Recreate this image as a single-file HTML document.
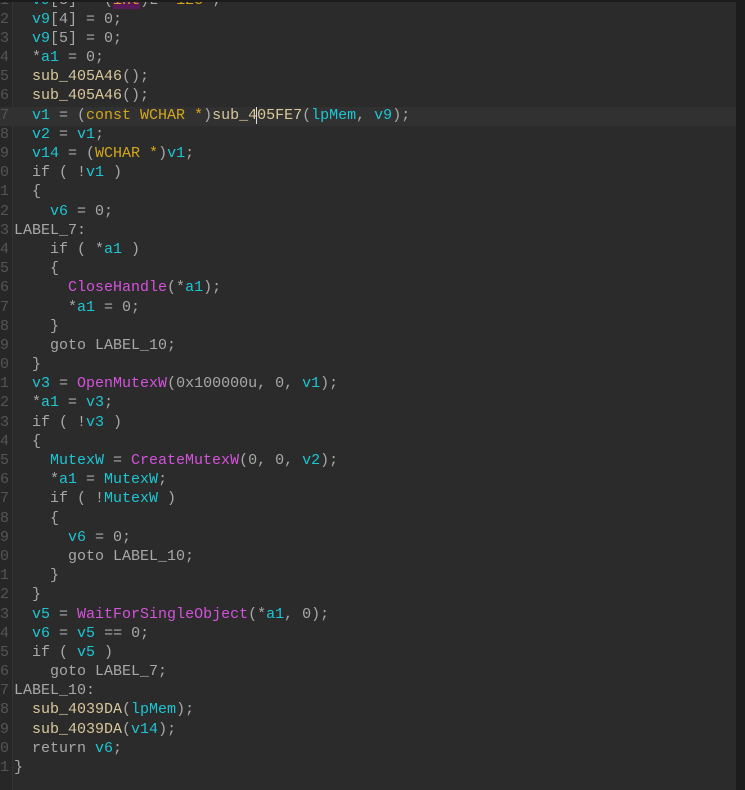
<!DOCTYPE html>
<html><head><style>
html,body{margin:0;padding:0;width:745px;height:790px;overflow:hidden;background:#1c1c1c}
#ed{position:absolute;left:0;top:2px;width:736px;height:788px;background:#2b2b2b;overflow:hidden}
#gut{position:absolute;left:0;top:0;width:12px;height:788px;background:#272727;border-right:1px solid #353535}
#c{position:absolute;left:0;top:-10.5px;width:736px}
.l{position:relative;height:19.2px;line-height:19.2px;font:15px "Liberation Mono",monospace;white-space:pre;color:#a8a8a8}
.n{position:absolute;left:-9px;width:18px;text-align:right;color:#555}
.t{position:absolute;left:14px}
.v{color:#1cc6d3}.f{color:#d8c89a}.p{color:#d452dc}.k{color:#d4a71a}
.hl{background:#313131}
.cur{border-left:1px solid #ddd;margin-left:-1px}
</style></head><body><div id="ed"><div id="gut"></div>
<div id="c">
<div class="l"><span class="n">1</span><span class="t">  <span class="v">v9</span>[3] = (<span class="k" style="background:#5a1a5a">int</span>)L <span class="k">"123"</span>;</span></div>
<div class="l"><span class="n">2</span><span class="t">  <span class="v">v9</span>[4] = 0;</span></div>
<div class="l"><span class="n">3</span><span class="t">  <span class="v">v9</span>[5] = 0;</span></div>
<div class="l"><span class="n">4</span><span class="t">  *<span class="v">a1</span> = 0;</span></div>
<div class="l"><span class="n">5</span><span class="t">  <span class="f">sub_405A46</span>();</span></div>
<div class="l"><span class="n">6</span><span class="t">  <span class="f">sub_405A46</span>();</span></div>
<div class="l hl"><span class="n">7</span><span class="t">  <span class="v">v1</span> = (<span class="k">const WCHAR *</span>)<span class="f">sub_4<span class="cur"></span>05FE7</span>(<span class="v">lpMem</span>, <span class="v">v9</span>);</span></div>
<div class="l"><span class="n">8</span><span class="t">  <span class="v">v2</span> = <span class="v">v1</span>;</span></div>
<div class="l"><span class="n">9</span><span class="t">  <span class="v">v14</span> = (<span class="k">WCHAR *</span>)<span class="v">v1</span>;</span></div>
<div class="l"><span class="n">0</span><span class="t">  if ( !<span class="v">v1</span> )</span></div>
<div class="l"><span class="n">1</span><span class="t">  {</span></div>
<div class="l"><span class="n">2</span><span class="t">    <span class="v">v6</span> = 0;</span></div>
<div class="l"><span class="n">3</span><span class="t">LABEL_7:</span></div>
<div class="l"><span class="n">4</span><span class="t">    if ( *<span class="v">a1</span> )</span></div>
<div class="l"><span class="n">5</span><span class="t">    {</span></div>
<div class="l"><span class="n">6</span><span class="t">      <span class="p">CloseHandle</span>(*<span class="v">a1</span>);</span></div>
<div class="l"><span class="n">7</span><span class="t">      *<span class="v">a1</span> = 0;</span></div>
<div class="l"><span class="n">8</span><span class="t">    }</span></div>
<div class="l"><span class="n">9</span><span class="t">    goto LABEL_10;</span></div>
<div class="l"><span class="n">0</span><span class="t">  }</span></div>
<div class="l"><span class="n">1</span><span class="t">  <span class="v">v3</span> = <span class="p">OpenMutexW</span>(0x100000u, 0, <span class="v">v1</span>);</span></div>
<div class="l"><span class="n">2</span><span class="t">  *<span class="v">a1</span> = <span class="v">v3</span>;</span></div>
<div class="l"><span class="n">3</span><span class="t">  if ( !<span class="v">v3</span> )</span></div>
<div class="l"><span class="n">4</span><span class="t">  {</span></div>
<div class="l"><span class="n">5</span><span class="t">    <span class="v">MutexW</span> = <span class="p">CreateMutexW</span>(0, 0, <span class="v">v2</span>);</span></div>
<div class="l"><span class="n">6</span><span class="t">    *<span class="v">a1</span> = <span class="v">MutexW</span>;</span></div>
<div class="l"><span class="n">7</span><span class="t">    if ( !<span class="v">MutexW</span> )</span></div>
<div class="l"><span class="n">8</span><span class="t">    {</span></div>
<div class="l"><span class="n">9</span><span class="t">      <span class="v">v6</span> = 0;</span></div>
<div class="l"><span class="n">0</span><span class="t">      goto LABEL_10;</span></div>
<div class="l"><span class="n">1</span><span class="t">    }</span></div>
<div class="l"><span class="n">2</span><span class="t">  }</span></div>
<div class="l"><span class="n">3</span><span class="t">  <span class="v">v5</span> = <span class="p">WaitForSingleObject</span>(*<span class="v">a1</span>, 0);</span></div>
<div class="l"><span class="n">4</span><span class="t">  <span class="v">v6</span> = <span class="v">v5</span> == 0;</span></div>
<div class="l"><span class="n">5</span><span class="t">  if ( <span class="v">v5</span> )</span></div>
<div class="l"><span class="n">6</span><span class="t">    goto LABEL_7;</span></div>
<div class="l"><span class="n">7</span><span class="t">LABEL_10:</span></div>
<div class="l"><span class="n">8</span><span class="t">  <span class="f">sub_4039DA</span>(<span class="v">lpMem</span>);</span></div>
<div class="l"><span class="n">9</span><span class="t">  <span class="f">sub_4039DA</span>(<span class="v">v14</span>);</span></div>
<div class="l"><span class="n">0</span><span class="t">  return <span class="v">v6</span>;</span></div>
<div class="l"><span class="n">1</span><span class="t">}</span></div>
</div></div>
</body></html>
